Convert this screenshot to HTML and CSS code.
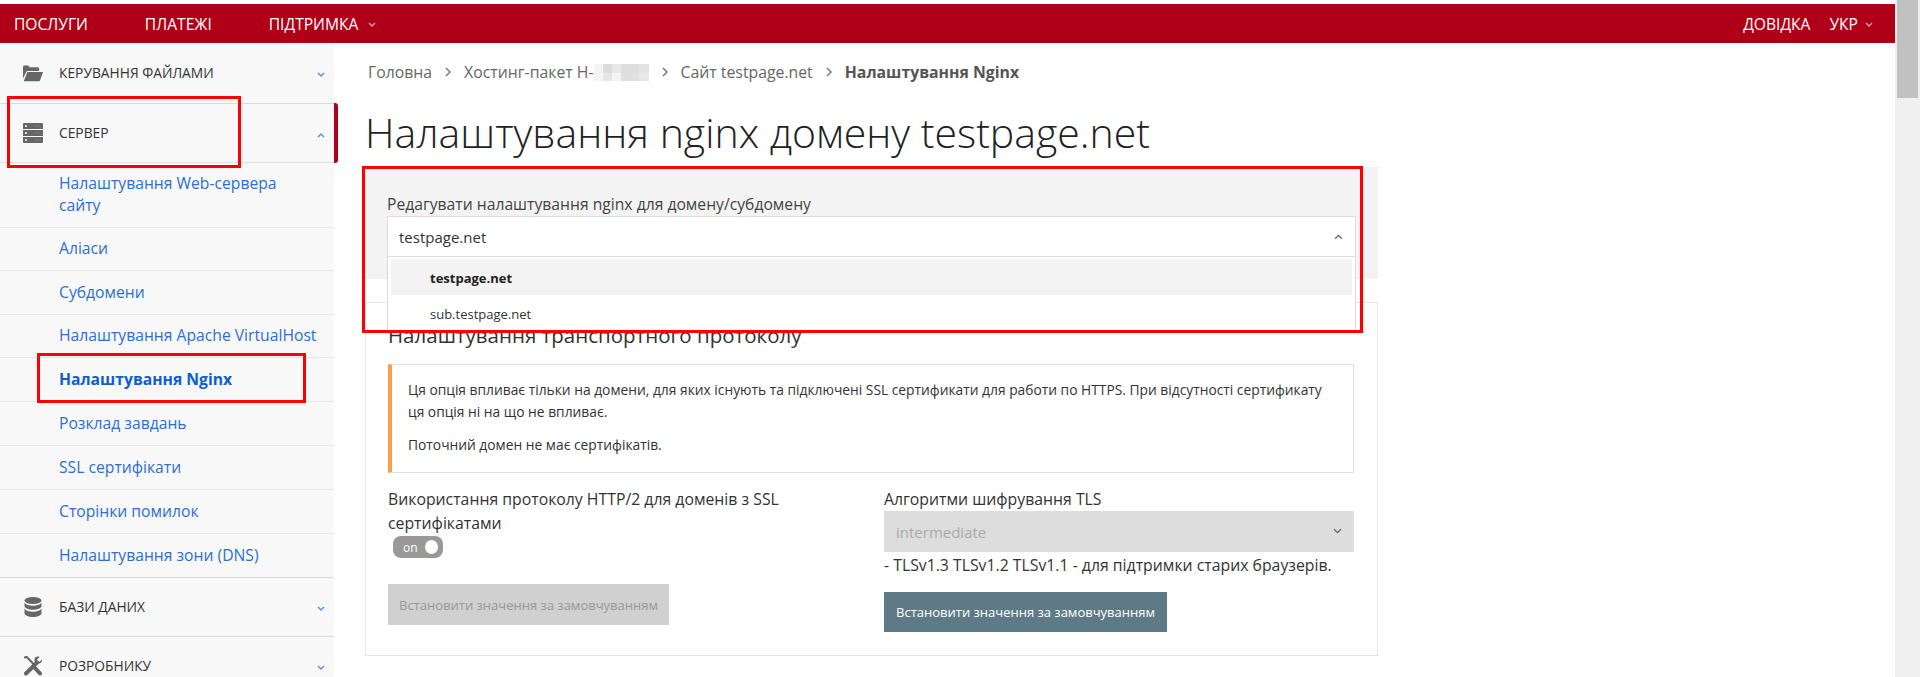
FILE: index.html
```html
<!DOCTYPE html>
<html lang="uk">
<head>
<meta charset="utf-8">
<title>Налаштування nginx</title>
<link rel="stylesheet" href="styles.css">
</head>
<body>
<div class="page">
  <div class="viewport">
    <header class="topbar">
      <nav class="topnav">
        <a class="topnav-link">ПОСЛУГИ</a>
        <a class="topnav-link">ПЛАТЕЖІ</a>
        <a class="topnav-link">ПІДТРИМКА<svg class="top-chev" viewBox="0 0 8 6"><path d="M1 1l3 3 3-3" /></svg></a>
      </nav>
      <nav class="topnav-right">
        <a class="topnav-link">ДОВІДКА</a>
        <a class="topnav-link">УКР<svg class="top-chev" viewBox="0 0 8 6"><path d="M1 1l3 3 3-3" /></svg></a>
      </nav>
    </header>
    <div class="layout">
      <aside class="sidebar">
        <div class="side-head first">
          <svg class="side-icon" viewBox="0 0 20 20"><path d="M0 4C0 3.200.6 2.500 1.400 2.500h3.800l1.500 1.700h8c.8 0 1.400.6 1.400 1.400V8H5.200c-1 0-1.800.5-2.200 1.400L0 15.500z"/><path d="M4.300 9H20l-3 8.500c-.2.5-.7.800-1.300.8H0.800z"/></svg>
          <span class="side-title">КЕРУВАННЯ ФАЙЛАМИ</span>
          <svg class="side-chev" viewBox="0 0 8 6"><path d="M1 1l3 3 3-3"/></svg>
        </div>
        <div class="side-head active">
          <svg class="side-icon" viewBox="0 0 20 20"><path d="M1 0h18a1 1 0 0 1 1 1v5H0V1a1 1 0 0 1 1-1zM0 7h20v6H0zM0 14h20v5a1 1 0 0 1-1 1H1a1 1 0 0 1-1-1z"/><circle class="server-dot" cx="3" cy="3" r="1.100"/><circle class="server-dot" cx="3" cy="10" r="1.100"/><circle class="server-dot" cx="3" cy="17" r="1.100"/><path class="server-line" d="M12 3.500l1.500-1 1.500 1 1.500-1 1 1M12 10h1.500l1-.8 1 .8h2M12 16.500l1.500 1 1.500-1 1.500 1 1-1"/></svg>
          <span class="side-title">СЕРВЕР</span>
          <svg class="side-chev" viewBox="0 0 8 6"><path d="M1 5l3-3 3 3"/></svg>
        </div>
        <a class="side-sub tall">Налаштування Web-сервера сайту</a>
        <a class="side-sub snug">Аліаси</a>
        <a class="side-sub">Субдомени</a>
        <a class="side-sub snug">Налаштування Apache VirtualHost</a>
        <a class="side-sub current">Налаштування Nginx</a>
        <a class="side-sub">Розклад завдань</a>
        <a class="side-sub">SSL сертифікати</a>
        <a class="side-sub">Сторінки помилок</a>
        <a class="side-sub">Налаштування зони (DNS)</a>
        <div class="side-head">
          <svg class="side-icon" viewBox="0 0 20 20"><ellipse cx="10" cy="3.500" rx="8.500" ry="3.500"/><path d="M1.500 5.500c1 2 4.500 3.200 8.500 3.200s7.500-1.200 8.500-3.200V9.500c-1 2-4.500 3.200-8.500 3.200S2.500 11.500 1.500 9.500z"/><path d="M1.500 11.500c1 2 4.500 3.200 8.500 3.200s7.500-1.200 8.500-3.200v5c-.5 2-4.500 3.500-8.500 3.500s-8-1.500-8.500-3.500z"/></svg>
          <span class="side-title">БАЗИ ДАНИХ</span>
          <svg class="side-chev" viewBox="0 0 8 6"><path d="M1 1l3 3 3-3"/></svg>
        </div>
        <div class="side-head">
          <svg class="side-icon" viewBox="0 0 20 20"><path class="tool-thin" d="M2 1.500l1.500-.8L11 8.500"/><path class="tool-thick" d="M11.500 11.500l5.500 6"/><path class="tool-thick" d="M3 17.500L14 6.500"/><path d="M19 3.500l-2.500 2.200-2-.2-.3-2L16.500 1c-2-.9-4.200-.2-4.800 1.500-.6 1.500-.2 3.200.8 4.200 1.300 1 3.500 1.300 5 .3 1.300-1 1.800-2.200 1.500-3.500z"/></svg>
          <span class="side-title">РОЗРОБНИКУ</span>
          <svg class="side-chev" viewBox="0 0 8 6"><path d="M1 1l3 3 3-3"/></svg>
        </div>
      </aside>
      <main class="content">
        <nav class="crumbs">
          <span>Головна</span>
          <svg class="crumb-sep" viewBox="0 0 6 10"><path d="M1 1l4 4-4 4"/></svg>
          <span class="crumb-host">Хостинг-пакет Н-<svg class="blur" viewBox="0 0 55 17"><rect width="55" height="17" fill="#f4f4f4"/><rect x="9" y="0" width="9" height="9" fill="#dcdcdc"/><rect x="18" y="0" width="9" height="9" fill="#e8e8e8"/><rect x="27" y="0" width="18" height="9" fill="#dedede"/><rect x="45" y="0" width="10" height="9" fill="#e3e3e3"/><rect x="9" y="9" width="9" height="8" fill="#e6e6e6"/><rect x="27" y="9" width="18" height="8" fill="#e0e0e0"/><rect x="45" y="9" width="10" height="8" fill="#e8e8e8"/></svg></span>
          <svg class="crumb-sep" viewBox="0 0 6 10"><path d="M1 1l4 4-4 4"/></svg>
          <span>Сайт testpage.net</span>
          <svg class="crumb-sep" viewBox="0 0 6 10"><path d="M1 1l4 4-4 4"/></svg>
          <strong>Налаштування Nginx</strong>
        </nav>
        <h1 class="page-title">Налаштування nginx домену testpage.net</h1>
        <section class="domain-panel">
          <label class="domain-label">Редагувати налаштування nginx для домену/субдомену</label>
          <div class="domain-select">
            <span>testpage.net</span>
            <svg class="select-chev" viewBox="0 0 8 6"><path d="M1 5l3-3 3 3"/></svg>
            <ul class="domain-menu">
              <li class="domain-option selected">testpage.net</li>
              <li class="domain-option">sub.testpage.net</li>
            </ul>
          </div>
        </section>
        <section class="card">
          <h2 class="card-title">Налаштування транспортного протоколу</h2>
          <div class="alert">
            <p>Ця опція впливає тільки на домени, для яких існують та підключені SSL сертификати для работи по HTTPS. При відсутності сертификату ця опція ні на що не впливає.</p>
            <p>Поточний домен не має сертифікатів.</p>
          </div>
          <div class="columns">
            <div class="col">
              <div class="field-label">Використання протоколу HTTP/2 для доменів з SSL сертифікатами</div>
              <div class="toggle"><span>on</span><i class="knob"></i></div>
              <button class="btn disabled" type="button">Встановити значення за замовчуванням</button>
            </div>
            <div class="col">
              <div class="field-label">Алгоритми шифрування TLS</div>
              <div class="tls-select"><span>intermediate</span><svg class="select-chev" viewBox="0 0 8 6"><path d="M1 1l3 3 3-3"/></svg></div>
              <div class="tls-note">- TLSv1.3 TLSv1.2 TLSv1.1 - для підтримки старих браузерів.</div>
              <button class="btn primary" type="button">Встановити значення за замовчуванням</button>
            </div>
          </div>
        </section>
      </main>
    </div>
    <div class="mark mark-server"></div>
    <div class="mark mark-nginx"></div>
    <div class="mark mark-domain"></div>
  </div>
  <div class="scrollbar"><div class="thumb"></div></div>
</div>
</body>
</html>
```
FILE: styles.css
```css
* { box-sizing: border-box; }
html, body { margin: 0; height: 100%; overflow: hidden; }
body { font-family: "Open Sans", "Noto Sans", sans-serif; color: #333; background: #fff; }
.page { display: flex; height: 677px; overflow: hidden; }
.viewport { position: relative; flex: 1; min-width: 0; padding-top: 4px; overflow: hidden; }
.scrollbar { width: 25px; background: #f0f0f0; padding: 0 2px; }
.thumb { height: 98px; background: #c1c1c1; }

.topbar { height: 39px; background: #b00017; display: flex; justify-content: space-between; align-items: center; padding: 0 22px 0 14px; color: #fff; font-size: 15.600px; }
.topnav { display: flex; gap: 57px; }
.topnav-right { display: flex; gap: 19px; }
.topnav-link { display: flex; align-items: center; }
.top-chev { width: 8px; height: 6px; margin-left: 10px; margin-top: 2px; fill: none; stroke: #e8a5ae; stroke-width: 1.3; }
.topnav-right .top-chev { margin-left: 7px; }

.layout { display: flex; }
.sidebar { width: 334px; flex: none; background: #f8f8f8; height: 640px; }
.side-head { position: relative; display: flex; align-items: center; height: 59px; padding: 0 10px 0 23px; border-top: 1px solid #dadada; font-size: 13.800px; color: #333; }
.side-head.first { height: 60px; border-top: 0; }
.side-head.active { height: 60px; border-bottom: 1px solid #e2e2e2; }
.side-head.active::after { content: ""; position: absolute; left: 100%; top: -1px; bottom: -1px; width: 4px; background: #b00017; border-radius: 0 3px 3px 0; }
.side-icon { width: 20px; height: 20px; fill: #666; flex: none; }
.server-dot { fill: #f4f4f4; }
.server-line { fill: none; stroke: #8c8c8c; stroke-width: .7; }
.tool-thin, .tool-thick { fill: none; stroke: #666; stroke-linecap: round; }
.tool-thin { stroke-width: 2; }
.tool-thick { stroke-width: 4; }
.side-title { margin-left: 16px; flex: 1; padding-bottom: 2px; }
.side-chev { width: 8px; height: 6px; fill: none; stroke: #5b92dc; stroke-width: 1.5; flex: none; margin-right: -1px; margin-top: 4px; }
.side-sub { display: flex; align-items: center; height: 44px; padding: 0 14px 2px 59px; font-size: 15.700px; line-height: 22px; color: #2c6fd1; border-top: 1px solid #e6e6e6; }
.side-sub.tall { height: 64px; border-top: 0; }
.side-sub.snug { height: 43px; }
.side-sub.current { font-weight: 700; color: #0f5fcf; }

.content { flex: 1; min-width: 0; padding-left: 31px; }
.crumbs { display: flex; align-items: center; gap: 13px; height: 24px; margin-top: 17px; padding-left: 3px; font-size: 15.800px; color: #666; }
.crumbs strong { font-weight: 700; color: #555; }
.crumb-host { display: flex; align-items: center; }
.crumb-sep { width: 6px; height: 10px; fill: none; stroke: #777; stroke-width: 1.5; flex: none; }
.blur { width: 55px; height: 17px; }
.page-title { margin: 21px 0 0; width: 1013px; font-weight: 300; font-size: 41px; line-height: 54px; color: #222; }
.domain-panel { width: 1013px; height: 112px; margin-top: 8px; padding: 26px 22px 0; background: #f3f3f3; position: relative; z-index: 1; }
.domain-label { display: block; font-size: 15.700px; line-height: 22px; margin-bottom: 1px; color: #444; }
.domain-select { position: relative; display: flex; align-items: center; justify-content: space-between; height: 41px; padding: 0 12px 0 11px; background: #fff; border: 1px solid #ddd; font-size: 15px; color: #333; }
.select-chev { width: 9px; height: 7px; fill: none; stroke: #666; stroke-width: 1.2; flex: none; }
.domain-menu { position: absolute; left: -1px; right: -1px; top: 40px; margin: 0; padding: 2px 3px 0; list-style: none; background: #fff; border: 1px solid #ddd; border-top: 0; height: 75px; }
.domain-option { height: 36px; padding: 1px 0 0 39px; display: flex; align-items: center; font-size: 13px; color: #333; }
.domain-option.selected { background: #f3f3f3; font-weight: 700; color: #222; }

.card { width: 1013px; height: 354px; margin-top: 23px; padding: 18px 23px 0 22px; border: 1px solid #e5e5e5; }
.card-title { margin: 0; font-weight: 400; font-size: 20.500px; line-height: 28px; color: #333; }
.alert { height: 109px; margin-top: 15px; padding: 14px 18px 0 16px; border: 1px solid #e0e0e0; border-left: 4px solid #ff9b4d; font-size: 13.800px; line-height: 22px; color: #333; }
.alert p { margin: 0 0 11px; }
.columns { display: grid; grid-template-columns: 1fr 470px; column-gap: 26px; margin-top: 14px; }
.field-label { font-size: 15.800px; line-height: 24px; color: #333; }
.toggle { display: flex; align-items: center; justify-content: space-between; width: 50px; height: 22px; margin: 1px 0 0 5px; padding: 0 5px 0 10px; background: #999; border-radius: 8px; color: #fff; font-size: 12px; }
.knob { width: 13px; height: 14px; background: #fff; border-radius: 50%; }
.btn { display: block; height: 41px; width: 281px; padding: 0; border: 0; font-family: inherit; font-size: 13px; }
.btn.disabled { margin-top: 26px; background: #d0d0d0; color: #999; }
.btn.primary { margin-top: 15px; width: 283px; height: 40px; background: #5f7a87; color: #fff; }
.tls-select { display: flex; align-items: center; justify-content: space-between; height: 41px; padding: 0 12px; background: #ddd; font-size: 15px; color: #aaa; }
.tls-note { font-size: 15.800px; line-height: 24px; margin-top: 1px; color: #333; }

.mark { position: absolute; z-index: 2; border: 3px solid #f00; pointer-events: none; }
.mark-server { left: 7px; top: 96px; width: 234px; height: 72px; }
.mark-nginx { left: 37px; top: 353px; width: 269px; height: 50px; }
.mark-domain { left: 362px; top: 166px; width: 1001px; height: 167px; }
```
